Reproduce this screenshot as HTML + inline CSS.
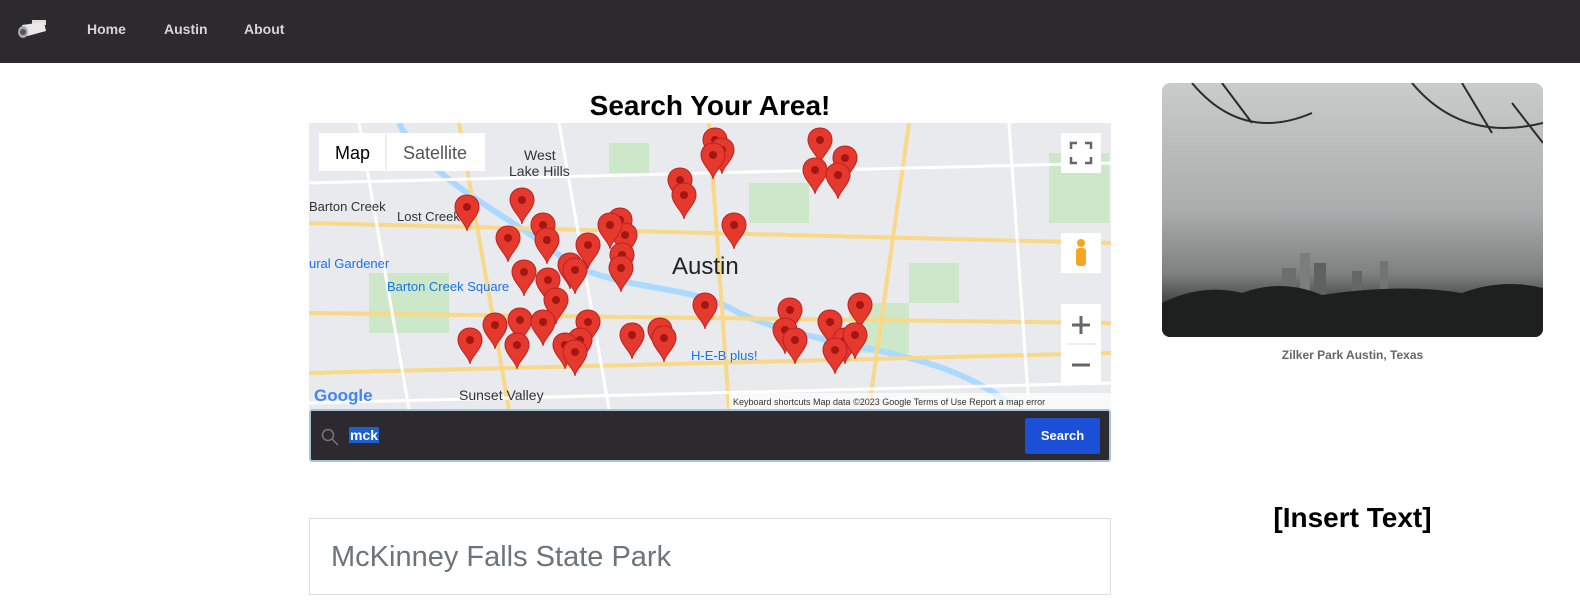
<!DOCTYPE html>
<html><head><meta charset="utf-8"><style>
*{margin:0;padding:0;box-sizing:border-box}
html,body{overflow:hidden}
body{width:1580px;height:615px;background:#fff;font-family:"Liberation Sans",sans-serif;position:relative}
nav{position:absolute;left:0;top:0;width:1580px;height:63px;background:#2c292f}
nav a{position:absolute;top:21px;color:#d6d6d6;font-weight:bold;font-size:14px;text-decoration:none}
h1{position:absolute;left:309px;width:802px;top:90px;text-align:center;font-size:28px;font-weight:900;color:#000}
#map{position:absolute;left:309px;top:123px;width:802px;height:286px;background:#e9eaee;overflow:hidden}
.search{position:absolute;left:309px;top:409px;width:802px;height:53px;background:#2c292f;border:2px solid #a9c2dc;border-radius:3px}
.btn{position:absolute;right:9px;top:7px;width:75px;height:36px;background:#1b4fd6;color:#fff;font-weight:bold;font-size:13px;text-align:center;line-height:36px;border-radius:2px}
.card{position:absolute;left:309px;top:518px;width:802px;height:77px;border:1px solid #ddd}
.card div{position:absolute;left:21px;top:22px;font-size:29px;color:#6c747c}
.photo{position:absolute;left:1162px;top:83px;width:381px;height:254px;border-radius:8px;overflow:hidden;background:linear-gradient(#c8cccb,#a9adac 50%,#7d8281 75%,#3a3d3c 88%,#1f2120)}
</style></head><body>
<nav>
<svg style="position:absolute;left:16px;top:19px" width="32" height="24" viewBox="0 0 32 24"><rect x="16" y="1" width="14" height="5" fill="#ddd"/><path d="M6 6 L28 3 L30 12 L8 18 Z" fill="#e8e8e8"/><ellipse cx="7" cy="13" rx="5" ry="6" fill="#aaa"/><circle cx="7" cy="13" r="3" fill="#555"/></svg>
<a style="left:87px">Home</a><a style="left:164px">Austin</a><a style="left:244px">About</a>
</nav>
<h1>Search Your Area!</h1>
<div id="map">
<svg width="802" height="286" viewBox="0 0 802 286">
<defs><g id="p"><path d="M0 0c-7 0-12 5-12 12c0 9 12 18 12 24c0-6 12-15 12-24c0-7-5-12-12-12z" transform="translate(0,-12)" fill="#e5392e" stroke="#b22" stroke-width="1"/><circle cx="0" cy="0" r="4" fill="#a41612"/></g></defs>
<rect x="440" y="60" width="60" height="40" fill="#cde8c8"/><rect x="540" y="180" width="60" height="50" fill="#cde8c8"/><rect x="60" y="150" width="80" height="60" fill="#cde8c8"/><rect x="600" y="140" width="50" height="40" fill="#cde8c8"/><rect x="740" y="30" width="60" height="70" fill="#cde8c8"/><rect x="300" y="20" width="40" height="30" fill="#cde8c8"/>
<path d="M90 0 C120 60 200 90 260 140 C320 170 380 160 430 190 C520 230 620 220 700 280" stroke="#aadaff" stroke-width="6" fill="none"/>
<path d="M0 250 L802 230 M150 0 L200 286 M400 0 L420 286 M0 100 L802 120 M600 0 L560 286 M0 190 L802 200" stroke="#f9d887" stroke-width="4" fill="none"/>
<path d="M50 0 L100 286 M250 0 L300 286 M0 60 L802 40 M0 280 L802 260 M700 0 L720 286" stroke="#fff" stroke-width="3" fill="none"/>
<rect x="10" y="10" width="166" height="38" fill="#fff"/><text x="26" y="36" font-size="18" font-family="Liberation Sans" fill="#000">Map</text><line x1="77" y1="10" x2="77" y2="48" stroke="#ddd"/><text x="94" y="36" font-size="18" font-family="Liberation Sans" fill="#555">Satellite</text>
<text x="363" y="151" font-size="24" font-family="Liberation Sans" fill="#222">Austin</text>
<text x="215" y="37" font-size="14" font-family="Liberation Sans" fill="#333">West</text><text x="200" y="53" font-size="14" font-family="Liberation Sans" fill="#333">Lake Hills</text>
<text x="0" y="88" font-size="13" font-family="Liberation Sans" fill="#333">Barton Creek</text><text x="88" y="98" font-size="13" font-family="Liberation Sans" fill="#333">Lost Creek</text>
<text x="78" y="168" font-size="13" font-family="Liberation Sans" fill="#1a73e8">Barton Creek Square</text><text x="0" y="145" font-size="13" font-family="Liberation Sans" fill="#1a73e8">ural Gardener</text>
<text x="150" y="277" font-size="14" font-family="Liberation Sans" fill="#333">Sunset Valley</text><text x="382" y="237" font-size="13" font-family="Liberation Sans" fill="#1a73e8">H-E-B plus!</text>
<text x="5" y="278" font-size="17" font-weight="bold" font-family="Liberation Sans" fill="#4285f4">Google</text>
<rect x="420" y="270" width="382" height="16" fill="rgba(255,255,255,.7)"/><text x="424" y="282" font-size="9" font-family="Liberation Sans" fill="#333">Keyboard shortcuts    Map data ©2023 Google    Terms of Use    Report a map error</text>
<rect x="752" y="10" width="40" height="40" fill="#fff"/><path d="M762 26v-6h6M776 20h6v6M782 34v6h-6M768 40h-6v-6" stroke="#666" stroke-width="2.5" fill="none"/>
<rect x="752" y="110" width="40" height="40" fill="#fff"/><circle cx="772" cy="120" r="4" fill="#f5a623"/><rect x="767" y="125" width="10" height="18" rx="3" fill="#f5a623"/>
<rect x="752" y="181" width="40" height="81" fill="#fff"/><path d="M763 202h18M772 193v18M763 242h18" stroke="#666" stroke-width="3"/><line x1="758" y1="221" x2="786" y2="221" stroke="#ddd"/>
<g>
<use href="#p" x="406" y="17"/><use href="#p" x="413" y="27"/><use href="#p" x="404" y="32"/><use href="#p" x="511" y="17"/><use href="#p" x="536" y="35"/><use href="#p" x="506" y="47"/><use href="#p" x="529" y="52"/><use href="#p" x="158" y="84"/><use href="#p" x="213" y="77"/><use href="#p" x="371" y="57"/><use href="#p" x="375" y="72"/><use href="#p" x="425" y="102"/><use href="#p" x="199" y="115"/><use href="#p" x="234" y="102"/><use href="#p" x="238" y="117"/><use href="#p" x="311" y="97"/><use href="#p" x="316" y="112"/><use href="#p" x="279" y="122"/><use href="#p" x="313" y="132"/><use href="#p" x="261" y="142"/><use href="#p" x="215" y="149"/><use href="#p" x="239" y="157"/><use href="#p" x="266" y="147"/><use href="#p" x="247" y="177"/><use href="#p" x="211" y="197"/><use href="#p" x="186" y="202"/><use href="#p" x="161" y="217"/><use href="#p" x="208" y="222"/><use href="#p" x="234" y="199"/><use href="#p" x="279" y="199"/><use href="#p" x="271" y="217"/><use href="#p" x="256" y="222"/><use href="#p" x="266" y="229"/><use href="#p" x="323" y="212"/><use href="#p" x="351" y="207"/><use href="#p" x="355" y="215"/><use href="#p" x="396" y="182"/><use href="#p" x="551" y="182"/><use href="#p" x="481" y="187"/><use href="#p" x="476" y="207"/><use href="#p" x="486" y="217"/><use href="#p" x="521" y="199"/><use href="#p" x="536" y="217"/><use href="#p" x="526" y="227"/><use href="#p" x="546" y="212"/><use href="#p" x="312" y="145"/><use href="#p" x="301" y="102"/>
</g>
</svg>
</div>
<div class="search">
<svg style="position:absolute;left:10px;top:17px" width="18" height="18"><circle cx="7" cy="7" r="5.5" stroke="#777" stroke-width="1.5" fill="none"/><path d="M11 11l6 6" stroke="#777" stroke-width="1.5"/></svg>
<span style="position:absolute;left:38px;top:16px;background:#1c5fd0;color:#fff;font-weight:bold;font-size:14px;padding:0 1px">mck</span>
<div class="btn">Search</div></div>
<div class="card"><div>McKinney Falls State Park</div></div>
<div class="photo"><svg width="381" height="254"><rect x="120" y="185" width="14" height="35" fill="#6a6e6d"/><rect x="138" y="170" width="10" height="50" fill="#7a7e7d"/><rect x="152" y="180" width="12" height="40" fill="#5d6160"/><rect x="190" y="188" width="10" height="30" fill="#666"/><rect x="218" y="178" width="8" height="40" fill="#707473"/><path d="M0 220 Q40 200 80 210 Q120 195 160 212 Q240 200 300 210 Q340 195 381 205 L381 254 L0 254Z" fill="#1e201f"/><path d="M30 0 Q80 60 150 30 M60 0 L90 40 M250 0 Q300 60 381 40 M300 0 L330 50 M350 20 L381 60" stroke="#2a2c2b" stroke-width="2" fill="none"/></svg></div>
<div style="position:absolute;left:1162px;width:381px;top:348px;text-align:center;font-size:12px;font-weight:bold;color:#666">Zilker Park Austin, Texas</div>
<div style="position:absolute;left:1162px;width:381px;top:502px;text-align:center;font-size:28px;font-weight:bold;color:#000">[Insert Text]</div>
</body></html>
